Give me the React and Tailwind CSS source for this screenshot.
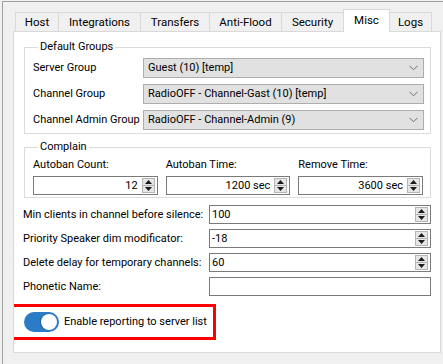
import React from 'react';

const tabs = [
  { name: 'Host', w: 'w-[44px]' },
  { name: 'Integrations', w: 'w-[83px]' },
  { name: 'Transfers', w: 'w-[70px]' },
  { name: 'Anti-Flood', w: 'w-[73px]' },
  { name: 'Security', w: 'w-[63px]' },
  { name: 'Misc', w: 'w-[47px]', active: true },
  { name: 'Logs', w: 'w-[43px]' },
];

function Chevron() {
  return (
    <svg width="9" height="6" viewBox="0 0 9 6" className="shrink-0">
      <path d="M0.5 0.8 L4.5 4.8 L8.5 0.8" fill="none" stroke="#6d6d6d" strokeWidth="1" />
    </svg>
  );
}

function Select({ value }) {
  return (
    <div className="flex h-[20px] flex-1 items-center justify-between border border-[#adadad] bg-[#e1e1e1] pl-[4px] pr-[5px]">
      <span>{value}</span>
      <Chevron />
    </div>
  );
}

function SpinButtons() {
  return (
    <div className="flex h-full w-[13px] shrink-0 flex-col border border-[#b4b4b4]">
      <div className="flex flex-1 items-center justify-center border-b border-[#b4b4b4] bg-[#e6e6e6]">
        <svg width="7" height="4" viewBox="0 0 7 4">
          <path d="M0 4 L3.5 0 L7 4 Z" fill="#1a1a1a" />
        </svg>
      </div>
      <div className="flex flex-1 items-center justify-center bg-[#e6e6e6]">
        <svg width="7" height="4" viewBox="0 0 7 4">
          <path d="M0 0 L3.5 4 L7 0 Z" fill="#1a1a1a" />
        </svg>
      </div>
    </div>
  );
}

function SpinBox({ value, right }) {
  return (
    <div className="flex h-[19px] items-center border border-[#7a7a7a] bg-white py-[1px] pr-[2px]">
      <span className={'flex-1 ' + (right ? 'pr-[4px] text-right' : 'pl-[2px]')}>{value}</span>
      <SpinButtons />
    </div>
  );
}

export default function App() {
  return (
    <div
      className="h-[364px] w-[443px] overflow-hidden whitespace-nowrap bg-[#f0f0f0] text-[11px] leading-[16px] text-black"
      style={{ fontFamily: 'Roboto, "Noto Sans", sans-serif' }}
    >
      <div className="ml-[2px] mt-[1px] h-full border-l border-t border-[#a0a0a0] pl-[10px] pt-[7px]">
        {/* tab bar */}
        <div className="relative z-10 flex h-[22px] items-end pl-[2px] text-[11.5px]">
          {tabs.map((t) =>
            t.active ? (
              <div
                key={t.name}
                className={t.w + ' -mb-px -ml-px flex h-[23px] items-center justify-center border border-b-0 border-[#d9d9d9] bg-white pb-[2px]'}
              >
                {t.name}
              </div>
            ) : (
              <div
                key={t.name}
                className={t.w + ' -ml-px flex h-[19px] items-center justify-center border border-b-0 border-[#d9d9d9] bg-[#f0f0f0] first:ml-0'}
              >
                {t.name}
              </div>
            )
          )}
        </div>

        {/* page */}
        <div className="h-[322px] w-[428px] overflow-hidden border border-[#d9d9d9] bg-white">
          <fieldset className="ml-[10px] mt-[7px] w-[407px] border border-[#dcdcdc] pb-[3px] pl-[8px] pr-[6px]">
            <legend className="ml-[5px] px-[2px]">Default Groups</legend>
            <div className="mt-[3px] flex flex-col gap-[6px]">
              {[
                ['Server Group', 'Guest (10) [temp]'],
                ['Channel Group', 'RadioOFF - Channel-Gast (10) [temp]'],
                ['Channel Admin Group', 'RadioOFF - Channel-Admin (9)'],
              ].map(([label, value]) => (
                <div key={label} className="flex items-center">
                  <span className="w-[110px] shrink-0">{label}</span>
                  <Select value={value} />
                </div>
              ))}
            </div>
          </fieldset>

          <fieldset className="ml-[10px] mt-[5px] w-[407px] border border-[#dcdcdc] pb-[2px] pl-[8px] pr-[7px]">
            <legend className="ml-[5px] px-[2px]">Complain</legend>
            <div className="mt-[2px] grid grid-cols-3 gap-x-[8px] gap-y-[3px]">
              <span>Autoban Count:</span>
              <span>Autoban Time:</span>
              <span>Remove Time:</span>
              <SpinBox value="12" right />
              <SpinBox value="1200 sec" right />
              <SpinBox value="3600 sec" right />
            </div>
          </fieldset>

          <div className="ml-[9px] mt-[7px] flex w-[408px] flex-col gap-[5px]">
            {[
              ['Min clients in channel before silence:', '100'],
              ['Priority Speaker dim modificator:', '-18'],
              ['Delete delay for temporary channels:', '60'],
            ].map(([label, value]) => (
              <div key={label} className="flex items-center">
                <span className="w-[186px] shrink-0">{label}</span>
                <div className="flex-1">
                  <SpinBox value={value} />
                </div>
              </div>
            ))}
            <div className="flex items-center">
              <span className="w-[186px] shrink-0">Phonetic Name:</span>
              <div className="h-[19px] flex-1 border border-[#7a7a7a] bg-white" />
            </div>
          </div>

          <div className="-ml-[5px] mt-[8px] flex h-[36px] w-[207px] items-center border-[3px] border-[#ff0000] pl-[12px]">
            <div className="flex h-[20px] w-[35px] items-center justify-end rounded-full bg-[#2a7cc6] pr-[2px]">
              <div className="h-[16px] w-[16px] rounded-full bg-white shadow-[-1px_0_1px_rgba(0,0,0,0.25)]" />
            </div>
            <span className="ml-[5px]">Enable reporting to server list</span>
          </div>
        </div>
      </div>
    </div>
  );
}
